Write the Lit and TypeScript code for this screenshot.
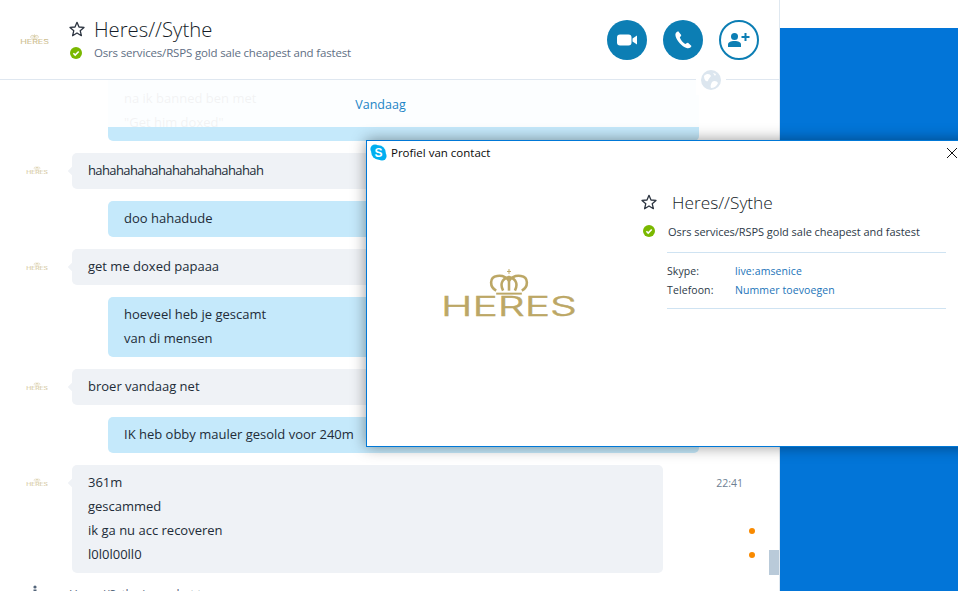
import { LitElement, html, css, svg } from "lit";
import { customElement, property } from "lit/decorators.js";

@customElement("heres-logo")
class HeresLogo extends LitElement {
  @property({ type: Number }) w = 136;
  static styles = css`
    :host { display: block; line-height: 0; }
    svg { overflow: hidden; }
    text { font-family: Inter, "Liberation Sans", sans-serif; font-weight: 300; font-size: 28px; fill: #bca765; stroke: #bca765; stroke-width: .5px; }
  `;
  render() {
    const h = (this.w * 60) / 140;
    return html`<svg width=${this.w} height=${h} viewBox="0 0 140 60" aria-label="HERES">
      ${svg`
      <g fill="none" stroke="#bca765" stroke-width="2.6">
        <path d="M57 22 C50 18 50 8 58 7 C65 6 68 9 70 12 C72 9 75 6 82 7 C90 8 90 18 83 22" />
        <path d="M64 22 C61 16 62 10 70 8 C78 10 79 16 76 22" />
        <path d="M70 8 V22" />
        <path d="M57 25 H83" stroke-width="2" />
        <path d="M70 0 V5 M68 2.5 H72" stroke-width="1" />
      </g>
      <text x="1" y="48" textLength="138" lengthAdjust="spacingAndGlyphs">HERES</text>
      `}
    </svg>`;
  }
}

const star = (s: number) => html`<svg class="star" width=${s} height=${s} viewBox="0 0 16 16"><path d="M8 1.3 L10 6 L15 6.4 L11.2 9.7 L12.4 14.7 L8 12 L3.6 14.7 L4.8 9.7 L1 6.4 L6 6 Z" fill="none" stroke="#2c3440" stroke-width="1.3" stroke-linejoin="round"/></svg>`;
const statusDot = (s: number) => html`<svg class="dot" width=${s} height=${s} viewBox="0 0 12 12"><circle cx="6" cy="6" r="6" fill="#7ab800"/><path d="M3.4 6.2 L5.2 8 L8.7 4.5" fill="none" stroke="#fff" stroke-width="1.6"/></svg>`;

type Msg = { me: boolean; lines: string[]; side?: boolean; tight?: boolean };
const MSGS: Msg[] = [
  { me: false, lines: ["hahahahahahahahahahahahah"], tight: true },
  { me: true, lines: ["doo hahadude"] },
  { me: false, lines: ["get me doxed papaaa"] },
  { me: true, lines: ["hoeveel heb je gescamt", "van di mensen"] },
  { me: false, lines: ["broer vandaag net"] },
  { me: true, lines: ["IK heb obby mauler gesold voor 240m"] },
  { me: false, lines: ["361m", "gescammed", "ik ga nu acc recoveren", "l0l0l00ll0"], side: true },
];

@customElement("app-root")
class AppRoot extends LitElement {
  static styles = css`
    :host {
      display: block; width: 958px; height: 591px; position: relative; overflow: hidden;
      background: #fff; font-family: "Open Sans", "Noto Sans", sans-serif; color: #2b3440;
    }
    .layout { display: flex; height: 100%; }
    .main { width: 779px; display: flex; flex-direction: column; border-right: 1px solid #dfe8f0; }
    .side-panel { flex: 1; padding-top: 28px; display: flex; }
    .blue { flex: 1; background: #0275d8; }

    .head { height: 79px; flex: none; border-bottom: 1px solid #dfe7f0; display: flex; align-items: center; position: relative; }
    .head-logo { width: 70px; padding: 0 0 0 20px; box-sizing: border-box; margin-top: 1px; flex: none; opacity: .8; }
    .head-info { flex: 1; display: grid; grid-template-columns: 24px auto; align-items: center; justify-content: start; row-gap: 1px; padding-bottom: 4px; }
    .head-info .star { margin-left: -1px; }
    .head-title { font-size: 20.3px; font-weight: 300; line-height: 29px; color: #141c28; }
    .head-status { font-size: 11.5px; line-height: 16px; color: #5f6f84; letter-spacing: -.17px; }
    .star, .dot { display: block; }
    .actions { display: flex; gap: 16px; padding-right: 20px; }
    .act { width: 40px; height: 40px; border-radius: 50%; background: #0c7eb4; display: flex; align-items: center; justify-content: center; box-sizing: border-box; }
    .act.line { background: #fff; border: 2px solid #0c7eb4; }
    .globe { position: absolute; left: 696px; top: 65px; width: 30px; height: 30px; background: #fff; display: flex; align-items: center; justify-content: center; z-index: 3; }

    .chat { flex: 1; min-height: 0; overflow: hidden; position: relative; display: flex; flex-direction: column; gap: 12px; font-size: 13px; line-height: 24px; color: #222c38; }
    .row { display: flex; flex: none; }
    .row.me { padding-left: 108px; }
    .avatar { width: 72px; flex: none; padding: 13px 0 0 26px; box-sizing: border-box; opacity: .7; }
    .bubble { width: 591px; box-sizing: border-box; padding: 5px 16px 7px; border-radius: 5px; position: relative; background: #eff2f6; }
    .me .bubble { background: #c5e9fb; }
    .tight { letter-spacing: -.6px; }
    .row:not(.me) .bubble::before { content: ""; position: absolute; left: -3px; top: 15px; width: 6px; height: 6px; background: #eff2f6; transform: rotate(45deg); }
    .first { padding-left: 108px; height: 61px; flex: none; }
    .first .bubble { background: #c5e9fb; height: 61px; padding-top: 6px; border-radius: 0 0 5px 5px; }
    .fade { position: absolute; left: 0; right: 0; top: 0; height: 47px; background: rgba(255,255,255,.94); display: flex; justify-content: center; padding-right: 18px; box-sizing: border-box; }
    .date { color: #1b84c6; font-size: 12.5px; line-height: 50px; height: 47px; }
    .meta { flex: 1; padding-top: 6px; display: flex; flex-direction: column; }
    .meta > div { height: 24px; display: flex; justify-content: flex-end; align-items: center; padding-right: 36px; font-size: 10.5px; color: #6e7f93; }
    .meta > div.o { padding-right: 24px; }
    .o i { width: 6px; height: 6px; border-radius: 50%; background: #f98a00; display: block; }
    .thumb { position: absolute; left: 769px; top: 470px; width: 10px; height: 25px; background: #b9cad9; }
    .typing { display: flex; align-items: flex-start; flex: none; padding-left: 31px; gap: 30px; line-height: 20px; }
    .typing-txt { color: #53657a; font-size: 12px; letter-spacing: -.2px; }

    .win { position: absolute; left: 366px; top: 140px; width: 640px; height: 307px; box-sizing: border-box; background: #fff; border: 1px solid #0078d7; box-shadow: 0 0 14px rgba(0,0,0,.42); z-index: 5; color: #000; }
    .bar { height: 22px; display: flex; align-items: center; padding-left: 3px; gap: 4px; font-size: 11.5px; color: #0a0a0a; }
    .close { position: absolute; left: 579px; top: 6px; }
    .body { display: flex; }
    .pic { width: 273px; flex: none; padding: 106px 0 0 73px; box-sizing: border-box; }
    .info { padding-top: 24px; width: 305px; }
    .i-title { display: grid; grid-template-columns: 32px auto; align-items: center; justify-content: start; height: 30px; font-size: 17.3px; font-weight: 300; color: #141c28; }
    .i-title .star { margin-left: 1px; }
    .i-status { display: grid; grid-template-columns: 25px auto; align-items: center; height: 24px; margin-top: 2px; font-size: 11px; letter-spacing: -.04px; color: #2d3a48; margin-left: 3px; }
    .rule { border: 0; border-top: 1px solid #cfe3f2; margin: 9px 0 0 27px; width: 279px; height: 0; }
    .pairs { margin: 9px 0 8px 27px; display: grid; grid-template-columns: 68px auto; font-size: 10.5px; line-height: 19px; color: #2d3a48; letter-spacing: .1px; }
    .pairs a { color: #1b74b9; text-decoration: none; }
    .rule.b { margin-top: 0; }
  `;

  row(m: Msg) {
    return html`<div class="row ${m.me ? "me" : ""}">
      ${m.me ? "" : html`<div class="avatar"><heres-logo .w=${22}></heres-logo></div>`}
      <div class="bubble">${m.lines.map((l) => html`<div class=${m.tight ? "tight" : ""}>${l}</div>`)}</div>
      ${m.side ? html`<div class="meta"><div>22:41</div><div></div><div class="o"><i></i></div><div class="o"><i></i></div></div>` : ""}
    </div>`;
  }

  render() {
    return html`<div class="layout">
      <div class="main">
        <div class="head">
          <div class="head-logo"><heres-logo .w=${29}></heres-logo></div>
          <div class="head-info">
            ${star(16)}<div class="head-title">Heres//Sythe</div>
            ${statusDot(12)}<div class="head-status">Osrs services/RSPS gold sale cheapest and fastest</div>
          </div>
          <div class="actions">
            <div class="act"><svg width="20" height="12" viewBox="0 0 20 12"><rect x="0" y="0.5" width="14.5" height="11" rx="3" fill="#fff"/><path d="M15.5 4.5 L20 1.5 V10.5 L15.5 7.5 Z" fill="#fff"/></svg></div>
            <div class="act"><svg width="20" height="20" viewBox="0 0 20 20"><path d="M5.2 1.2 C3 2 1.9 3.6 2.6 6.2 C3.8 10.6 8.8 16.4 13.6 18 C15.8 18.7 17.6 17.8 18.5 16 L15 12.8 C14 12.6 13.2 13.8 12.2 14 C10 13 7.6 10 6.8 7.6 C7.2 6.6 8.4 6.2 8.2 5 Z" fill="#fff"/></svg></div>
            <div class="act line"><svg width="22" height="14" viewBox="0 0 22 14"><circle cx="6.5" cy="3.5" r="3.5" fill="#0c7eb4"/><path d="M0 14 V11.5 C0 9.5 2.5 8 6.5 8 C10.5 8 13 9.5 13 11.5 V14 Z" fill="#0c7eb4"/><path d="M17.5 0 V8 M13.5 4 H21.5" stroke="#0c7eb4" stroke-width="2"/></svg></div>
          </div>
          <div class="globe"><svg width="20" height="20" viewBox="0 0 20 20"><circle cx="10" cy="10" r="10" fill="#dce6ef"/><path d="M3 6 C6 3 9 4 10 6 C9 8 7 9 7 11 C5 12 3 10 3 6 Z M11 12 C13 10 16 11 17 13 C16 16 13 18 10 18 C9 16 10 14 11 12 Z M12 3 L15 4 L14 6 Z" fill="#fff"/></svg></div>
        </div>
        <div class="chat">
          <div class="first"><div class="bubble"><div>na ik banned ben met</div><div>"Get him doxed"</div></div></div>
          ${MSGS.map((m) => this.row(m))}
          <div class="typing"><svg width="8" height="10" viewBox="0 0 8 10"><circle cx="4" cy="2" r="1.6" fill="#53657a"/><rect x="2.5" y="4.5" width="3" height="6" fill="#53657a"/></svg><span class="typing-txt">Heres//Sythe is aan het typen</span></div>
          <div class="fade"><span class="date">Vandaag</span></div>
          <div class="thumb"></div>
        </div>
      </div>
      <div class="side-panel"><div class="blue"></div></div>
    </div>
    <div class="win">
      <div class="bar">
        <svg width="17" height="17" viewBox="0 0 17 17"><circle cx="5" cy="5" r="4.6" fill="#00aff0"/><circle cx="12" cy="12" r="4.6" fill="#00aff0"/><circle cx="8.5" cy="8.5" r="7.2" fill="#00aff0"/><text x="8.5" y="12.8" text-anchor="middle" font-family="Liberation Sans, sans-serif" font-size="12" font-weight="700" fill="#fff">S</text></svg>
        <span>Profiel van contact</span>
      </div>
      <svg class="close" width="12" height="12" viewBox="0 0 12 12"><path d="M1 1 L11 11 M11 1 L1 11" stroke="#111" stroke-width="1"/></svg>
      <div class="body">
        <div class="pic"><heres-logo .w=${138}></heres-logo></div>
        <div class="info">
          <div class="i-title">${star(16)}<span>Heres//Sythe</span></div>
          <div class="i-status">${statusDot(12)}<span>Osrs services/RSPS gold sale cheapest and fastest</span></div>
          <hr class="rule" />
          <div class="pairs">
            <span>Skype:</span><a>live:amsenice</a>
            <span>Telefoon:</span><a>Nummer toevoegen</a>
          </div>
          <hr class="rule b" />
        </div>
      </div>
    </div>`;
  }
}
